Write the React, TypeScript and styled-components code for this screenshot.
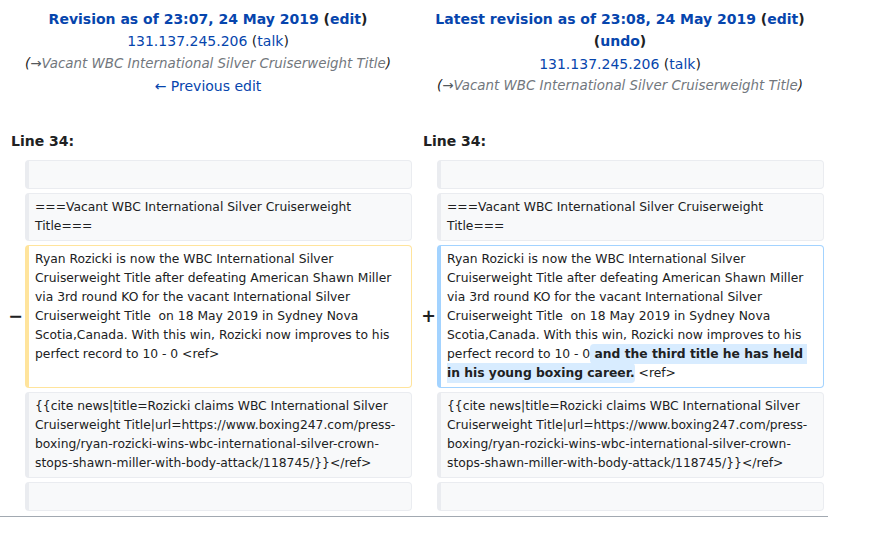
import React from "react";
import styled, { createGlobalStyle, css } from "styled-components";

const Global = createGlobalStyle`
  html, body { margin: 0; padding: 0; background: #fff; }
  body { font-family: "DejaVu Sans", sans-serif; color: #202122; font-size: 14px; }
`;

const DiffTable = styled.div`
  width: 828px;
  box-sizing: border-box;
  padding: 4px;
  display: grid;
  grid-template-columns: 17px 387px 17px 387px;
  column-gap: 4px;
  row-gap: 4px;
  border-bottom: 1px solid #a2a9b1;
  padding-bottom: 5px;
`;

const TitleCell = styled.div`
  grid-column: span 2;
  text-align: center;
  font-size: 14px;
  line-height: 22.4px;
  padding-top: 4px;
`;

const TitleLine = styled.div`
  font-weight: bold;
`;

const Link = styled.a`
  color: #0645ad;
  text-decoration: none;
`;

const InfoLine = styled.div``;

const Comment = styled.div`
  font-style: italic;
  font-size: 13.4px;
  color: #202122;
`;

const AutoComment = styled.span`
  color: #72777d;
`;

const Arrow = styled.span`
  color: #54595d;
`;

const LineNo = styled.div`
  grid-column: span 2;
  font-weight: bold;
  font-size: 14px;
  line-height: 22.4px;
  padding: 28px 0 4px 7px;
`;

const Marker = styled.div`
  display: flex;
  align-items: center;
  justify-content: flex-end;
  font-weight: bold;
  font-size: 17.5px;
  line-height: 1.2;
  color: #202122;
`;

const MarkerGlyph = styled.span<{ $shift: number }>`
  margin-right: ${({ $shift }) => -$shift}px;
`;

type Kind = "context" | "deleted" | "added";

const Line = styled.div<{ $kind: Kind }>`
  box-sizing: border-box;
  font-size: 12.32px;
  line-height: 19px;
  padding: 4px 6px;
  border-style: solid;
  border-width: 1px 1px 1px 4px;
  border-radius: 4px;
  white-space: pre-wrap;
  word-wrap: break-word;
  color: #202122;
  min-height: 29px;
  ${({ $kind }) =>
    $kind === "context"
      ? css`
          background: #f8f9fa;
          border-color: #eaecf0;
        `
      : $kind === "deleted"
      ? css`
          background: #fff;
          border-color: #ffe49c;
        `
      : css`
          background: #fff;
          border-color: #a3d3ff;
        `}
`;

const Change = styled.span`
  background: #d8ecff;
  font-weight: bold;
  border-radius: 4px;
  padding: 0.25em 0;
`;

const heading = "===Vacant WBC International Silver Cruiserweight Title===";
const para =
  "Ryan Rozicki is now the WBC International Silver Cruiserweight Title after defeating American Shawn Miller via 3rd round KO for the vacant International Silver Cruiserweight Title  on 18 May 2019 in Sydney Nova Scotia,Canada. With this win, Rozicki now improves to his perfect record to 10 - 0";
const cite =
  "{{cite news|title=Rozicki claims WBC International Silver Cruiserweight Title|url=https://www.boxing247.com/press-boxing/ryan-rozicki-wins-wbc-international-silver-crown-stops-shawn-miller-with-body-attack/118745/}}</ref>";

function ContextRow({ text }: { text: string }) {
  return (
    <>
      <Marker />
      <Line $kind="context">{text}</Line>
      <Marker />
      <Line $kind="context">{text}</Line>
    </>
  );
}

export default function App() {
  return (
    <>
      <Global />
      <DiffTable>
        <TitleCell>
          <TitleLine>
            <Link href="#">Revision as of 23:07, 24 May 2019</Link> (<Link href="#">edit</Link>)
          </TitleLine>
          <InfoLine>
            <Link href="#">131.137.245.206</Link> (<Link href="#">talk</Link>)
          </InfoLine>
          <Comment>
            (<Arrow>→</Arrow>
            <AutoComment>Vacant WBC International Silver Cruiserweight Title</AutoComment>)
          </Comment>
          <InfoLine>
            <Link href="#">← Previous edit</Link>
          </InfoLine>
        </TitleCell>
        <TitleCell>
          <TitleLine>
            <Link href="#">Latest revision as of 23:08, 24 May 2019</Link> (<Link href="#">edit</Link>) (
            <Link href="#">undo</Link>)
          </TitleLine>
          <InfoLine>
            <Link href="#">131.137.245.206</Link> (<Link href="#">talk</Link>)
          </InfoLine>
          <Comment>
            (<Arrow>→</Arrow>
            <AutoComment>Vacant WBC International Silver Cruiserweight Title</AutoComment>)
          </Comment>
        </TitleCell>

        <LineNo>Line 34:</LineNo>
        <LineNo>Line 34:</LineNo>

        <ContextRow text="" />
        <ContextRow text={heading} />

        <Marker>
          <MarkerGlyph $shift={2}>−</MarkerGlyph>
        </Marker>
        <Line $kind="deleted">{para + " <ref>"}</Line>
        <Marker>
          <MarkerGlyph $shift={3}>+</MarkerGlyph>
        </Marker>
        <Line $kind="added">
          {para}
          <Change>{" and the third title he has held in his young boxing career."}</Change>
          {" <ref>"}
        </Line>

        <ContextRow text={cite} />
        <ContextRow text="" />
      </DiffTable>
    </>
  );
}
